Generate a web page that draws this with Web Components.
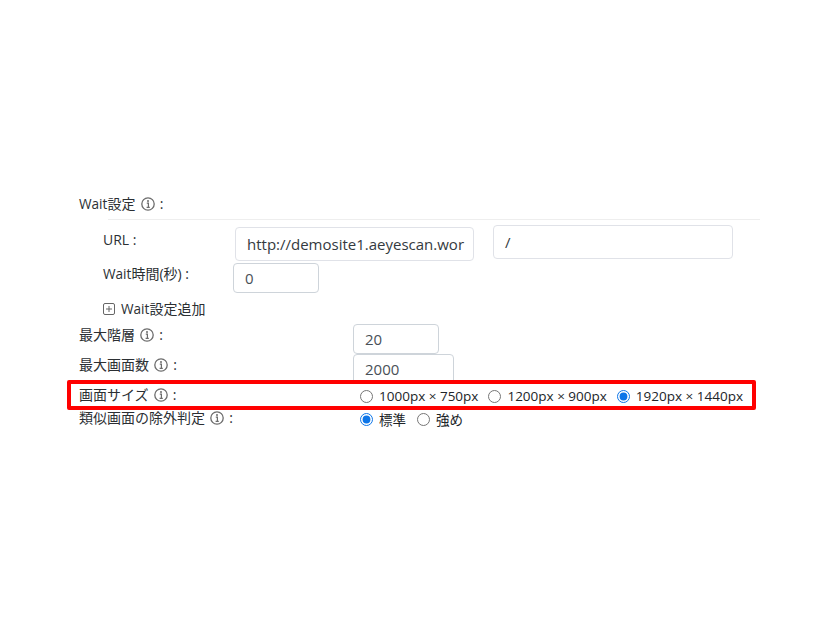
<!DOCTYPE html>
<html lang="ja">
<head>
<meta charset="utf-8">
<title>Wait設定</title>
<style>
  html, body { margin: 0; background: #fff; }
  body { font-family: "Open Sans", "Noto Sans CJK JP", sans-serif; color: #212529; }
</style>
</head>
<body>
<settings-form></settings-form>

<script>
class InfoIcon extends HTMLElement {
  connectedCallback() {
    this.attachShadow({ mode: 'open' });
    this.shadowRoot.innerHTML = `
      <style>
        :host { display: inline-block; width: 14px; height: 14px; vertical-align: -2px; margin: 0 1.5px; }
        svg { display: block; }
      </style>
      <svg width="14" height="14" viewBox="0 0 14 14" fill="none">
        <circle cx="7" cy="7" r="6.2" stroke="#6c6c6c" stroke-width="1.3"/>
        <circle cx="7" cy="4" r="1" fill="#6c6c6c"/>
        <path d="M5.8 6.2H7.4V10.2M5.6 10.4H8.8" stroke="#6c6c6c" stroke-width="1.2"/>
      </svg>`;
  }
}
customElements.define('info-icon', InfoIcon);

class PlusBox extends HTMLElement {
  connectedCallback() {
    this.attachShadow({ mode: 'open' });
    this.shadowRoot.innerHTML = `
      <style>
        :host { display: inline-block; width: 12px; height: 12px; margin-top: 2px; }
        svg { display: block; }
      </style>
      <svg width="12" height="12" viewBox="0 0 12 12" fill="none" stroke="#666">
        <rect x=".5" y=".5" width="11" height="11" rx="1.5"/>
        <path d="M6 3v6M3 6h6"/>
      </svg>`;
  }
}
customElements.define('plus-box', PlusBox);

class TextField extends HTMLElement {
  connectedCallback() {
    const w = this.getAttribute('width');
    const h = this.getAttribute('height');
    const border = this.getAttribute('border') || '#ced4da';
    const color = this.getAttribute('color') || '#495057';
    this.attachShadow({ mode: 'open' });
    this.shadowRoot.innerHTML = `
      <style>
        :host { display: block; width: ${w}px; height: ${h}px; box-sizing: border-box; flex: none;
          border: 1px solid ${border}; border-radius: 4px; background: #fff; padding: 0 10px 0 11px;
          font-size: 15px; line-height: ${h - 2}px; color: ${color}; overflow: hidden; white-space: nowrap; }
      </style>
      <slot></slot>`;
  }
}
customElements.define('text-field', TextField);

class RadioOption extends HTMLElement {
  connectedCallback() {
    const checked = this.hasAttribute('checked') ? 'checked' : '';
    const name = this.getAttribute('name');
    this.attachShadow({ mode: 'open' });
    this.shadowRoot.innerHTML = `
      <style>
        :host { display: inline-flex; align-items: center; font-size: 13.5px; color: #212529; white-space: nowrap; }
        input { width: 13px; height: 13px; margin: 0 6px 0 0; accent-color: #0d75e8; }
      </style>
      <input type="radio" name="${name}" ${checked}><slot></slot>`;
  }
}
customElements.define('radio-option', RadioOption);

class SettingsForm extends HTMLElement {
  connectedCallback() {
    this.attachShadow({ mode: 'open' });
    this.shadowRoot.innerHTML = `
      <style>
        :host { display: block; box-sizing: border-box; width: 826px; height: 620px; padding: 189px 66px 0 79px; font-size: 14px; color: #2b2f33; }
        .row { display: flex; }
        .label { flex: none; }
        .lat { font-size: 13.6px; }
        .head { height: 30px; line-height: 30px; }
        .divider { height: 1px; background: #eeeeee; margin-left: 29px; }
        .wait { padding-left: 24px; }
        .url { height: 36px; margin-top: 5px; }
        .url .label { width: 132px; line-height: 30px; }
        .url text-field:first-of-type { margin-top: 2px; margin-right: 19px; }
        .time { height: 30px; margin-top: 2px; }
        .time .label { width: 130px; line-height: 22px; }
        .add { height: 30px; display: flex; align-items: center; gap: 6px; }
        .levels .label, .pages .label, .size .label, .similar .label { width: 274px; line-height: 22px; }
        .levels { height: 30px; margin-top: 1px; }
        .pages { height: 30px; }
        .size { height: 23px; position: relative; }
        .similar { height: 24px; }
        .opts { display: flex; gap: 10px; align-items: center; height: 22px; padding-left: 7px; margin-top: 1px; }
        .similar .opts { gap: 11px; }
        .mark { position: absolute; left: -12px; top: -4px; width: 689px; height: 30px; box-sizing: border-box;
          border: 4px solid #ff0000; border-radius: 2px; pointer-events: none; }
      </style>
      <div class="head"><span class="lat">Wait</span>設定 <info-icon></info-icon> :</div>
      <div class="divider"></div>
      <div class="wait">
        <div class="row url">
          <div class="label">URL :</div>
          <text-field width="239" height="34" border="#e0e2e8" color="#343a40">http://demosite1.aeyescan.wor</text-field>
          <text-field width="240" height="34" border="#e0e2e8" color="#343a40">/</text-field>
        </div>
        <div class="row time">
          <div class="label"><span class="lat">Wait</span>時間(秒) :</div>
          <text-field width="86" height="30">0</text-field>
        </div>
        <div class="add"><plus-box></plus-box><span><span class="lat">Wait</span>設定追加</span></div>
      </div>
      <div class="row levels">
        <div class="label">最大階層 <info-icon></info-icon> :</div>
        <text-field width="86" height="30">20</text-field>
      </div>
      <div class="row pages">
        <div class="label">最大画面数 <info-icon></info-icon> :</div>
        <text-field width="101" height="30">2000</text-field>
      </div>
      <div class="row size">
        <div class="label">画面サイズ <info-icon></info-icon> :</div>
        <div class="opts">
          <radio-option name="size">1000px × 750px</radio-option>
          <radio-option name="size">1200px × 900px</radio-option>
          <radio-option name="size" checked>1920px × 1440px</radio-option>
        </div>
        <div class="mark"></div>
      </div>
      <div class="row similar">
        <div class="label">類似画面の除外判定 <info-icon></info-icon> :</div>
        <div class="opts">
          <radio-option name="similar" checked>標準</radio-option>
          <radio-option name="similar">強め</radio-option>
        </div>
      </div>`;
  }
}
customElements.define('settings-form', SettingsForm);
</script>
</body>
</html>
